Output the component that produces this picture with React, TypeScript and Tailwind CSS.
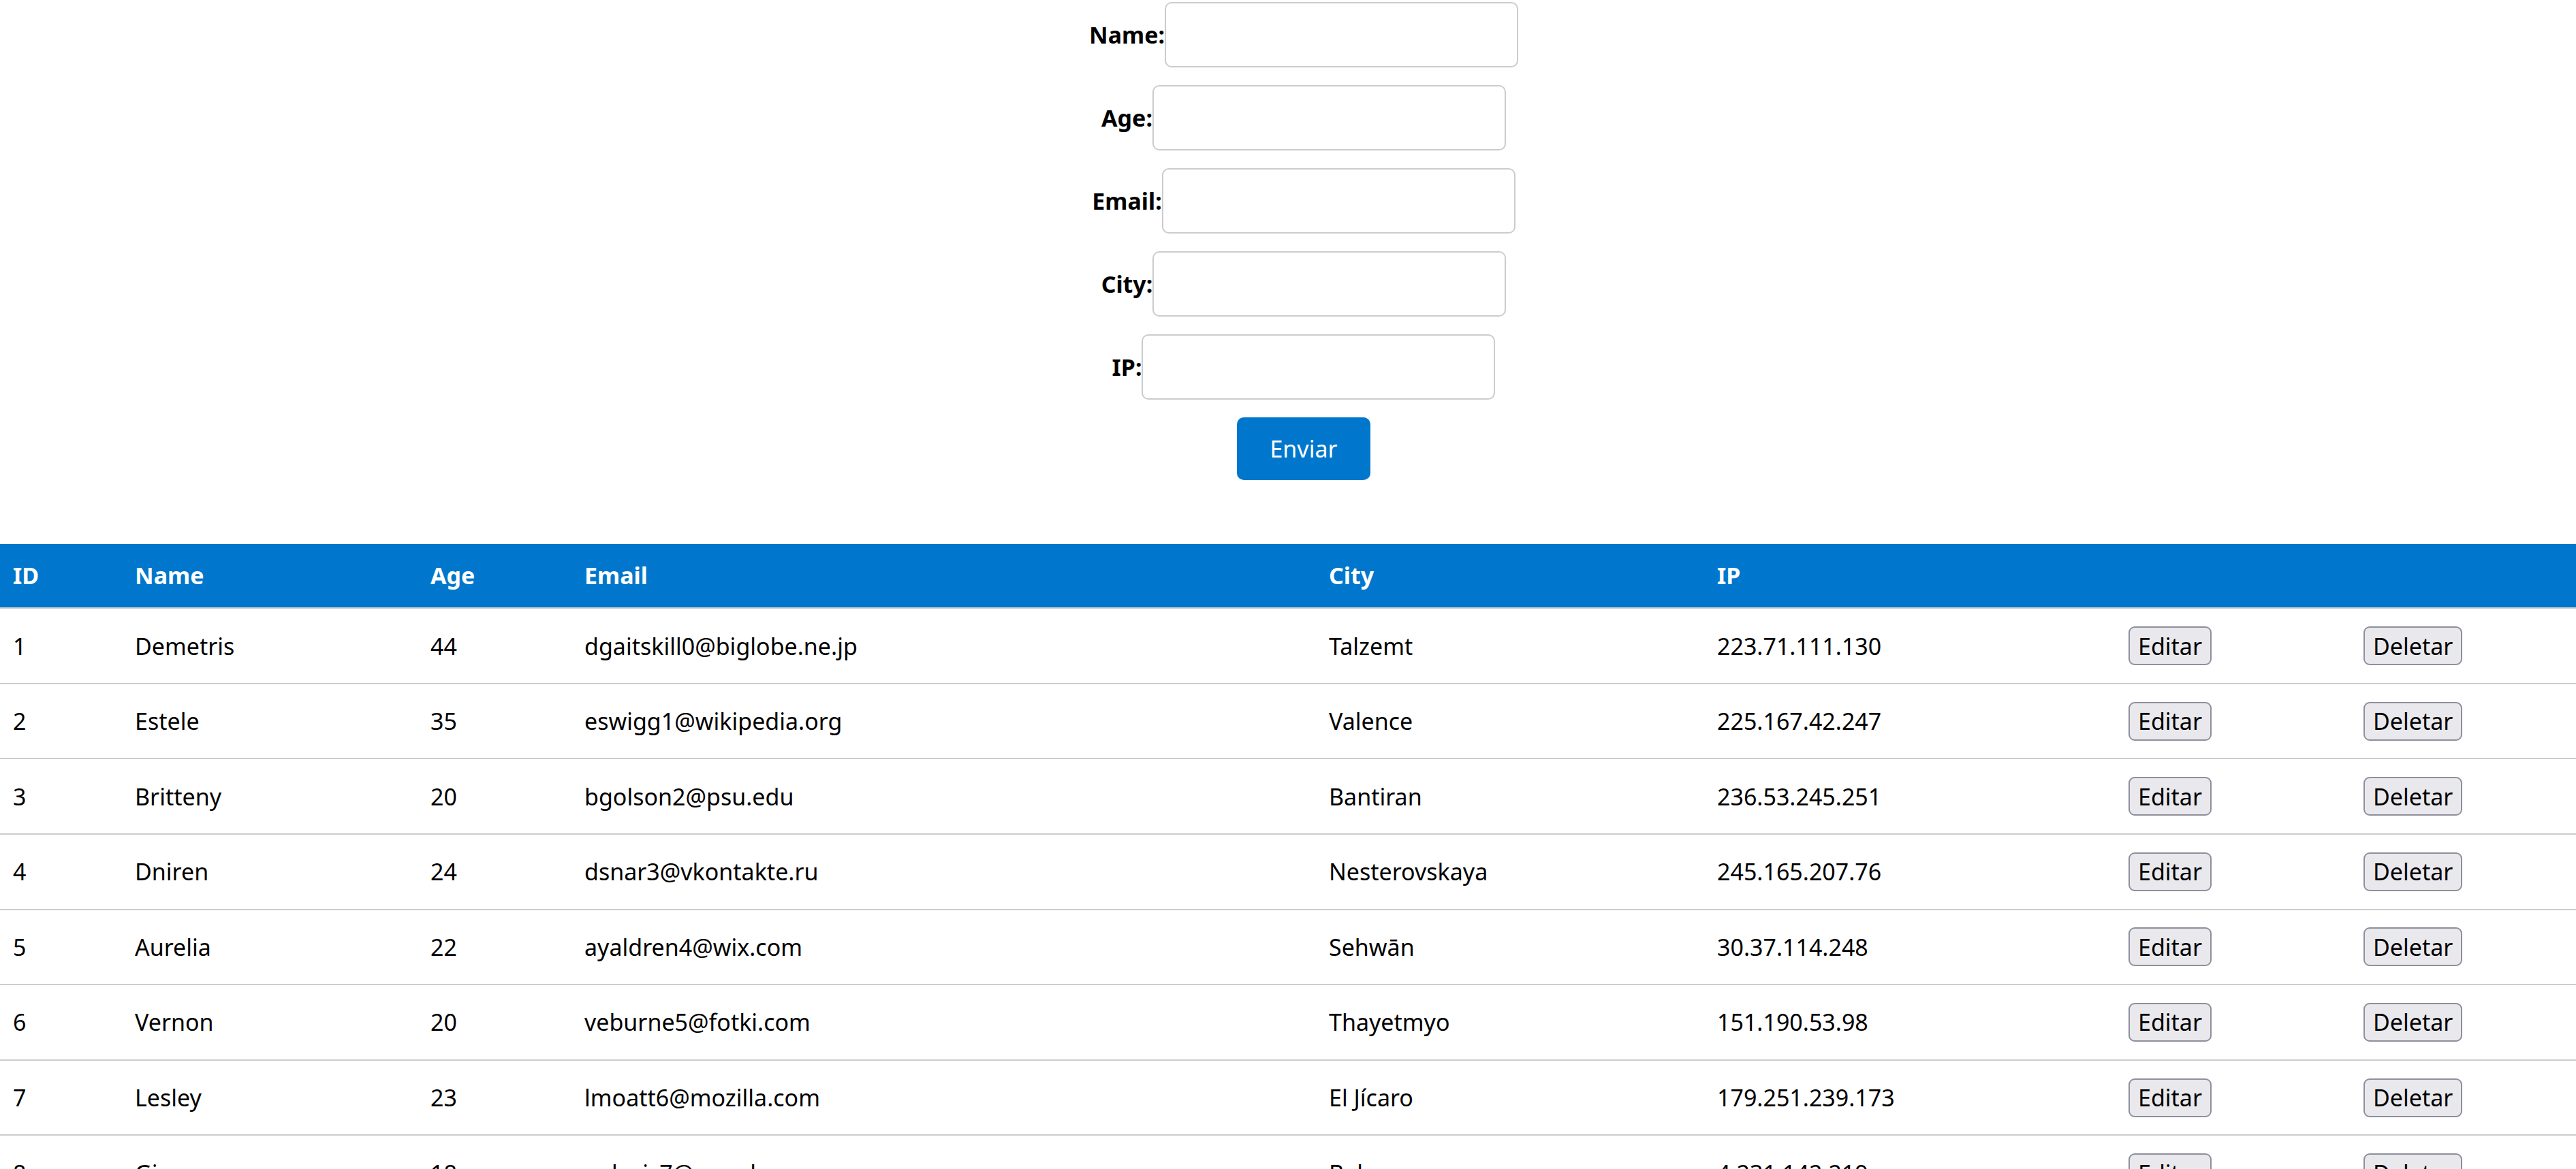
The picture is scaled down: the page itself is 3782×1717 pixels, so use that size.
import { useState } from 'react'

type User = {
  id: number
  name: string
  age: number
  email: string
  city: string
  ip: string
}

const users: User[] = [
  { id: 1, name: 'Demetris', age: 44, email: 'dgaitskill0@biglobe.ne.jp', city: 'Talzemt', ip: '223.71.111.130' },
  { id: 2, name: 'Estele', age: 35, email: 'eswigg1@wikipedia.org', city: 'Valence', ip: '225.167.42.247' },
  { id: 3, name: 'Britteny', age: 20, email: 'bgolson2@psu.edu', city: 'Bantiran', ip: '236.53.245.251' },
  { id: 4, name: 'Dniren', age: 24, email: 'dsnar3@vkontakte.ru', city: 'Nesterovskaya', ip: '245.165.207.76' },
  { id: 5, name: 'Aurelia', age: 22, email: 'ayaldren4@wix.com', city: 'Sehwān', ip: '30.37.114.248' },
  { id: 6, name: 'Vernon', age: 20, email: 'veburne5@fotki.com', city: 'Thayetmyo', ip: '151.190.53.98' },
  { id: 7, name: 'Lesley', age: 23, email: 'lmoatt6@mozilla.com', city: 'El Jícaro', ip: '179.251.239.173' },
  { id: 8, name: 'Giana', age: 18, email: 'galexis7@google.ca', city: 'Bakey', ip: '4.231.142.219' },
  { id: 9, name: 'Marchelle', age: 31, email: 'mbreem8@ucoz.ru', city: 'Jinhe', ip: '88.12.201.45' },
]

const fields = ['Name', 'Age', 'Email', 'City', 'IP']

export default function App() {
  const [values, setValues] = useState<Record<string, string>>({})

  return (
    <div className="font-['Noto_Sans',sans-serif] text-[34px] text-black bg-white min-h-screen">
      {/* form */}
      <form
        className="flex flex-col items-center gap-[26.4px] pt-[3px] pl-[46px]"
        onSubmit={(e) => e.preventDefault()}
      >
        {fields.map((f) => (
          <div key={f} className="flex items-center">
            <label className="font-bold leading-[46px]">{f}:</label>
            <input
              className="w-[519px] h-[95.6px] border-2 border-[#cccccc] rounded-[10px] px-[20px] outline-none"
              value={values[f] ?? ''}
              onChange={(e) => setValues({ ...values, [f]: e.target.value })}
            />
          </div>
        ))}
        <button
          type="submit"
          className="w-[196px] h-[92.4px] rounded-[10px] bg-[#0077cc] text-white leading-[46px]"
        >
          Enviar
        </button>
      </form>

      {/* table */}
      <table className="mt-[93.3px] w-full table-fixed border-separate border-spacing-0">
        <colgroup>
          <col className="w-[179px]" />
          <col className="w-[434px]" />
          <col className="w-[226px]" />
          <col className="w-[1093px]" />
          <col className="w-[570px]" />
          <col className="w-[604px]" />
          <col className="w-[345px]" />
          <col className="w-[331px]" />
        </colgroup>
        <thead>
          <tr className="bg-[#0077cc] text-white">
            {['ID', 'Name', 'Age', 'Email', 'City', 'IP', '', ''].map((h, i) => (
              <th
                key={i}
                className="text-left font-bold leading-[46px] px-[19px] py-[23.8px] border-b-2 border-[#cccccc]"
              >
                {h}
              </th>
            ))}
          </tr>
        </thead>
        <tbody>
          {users.map((u) => (
            <tr key={u.id}>
              <td className="px-[19px] py-[25.8px] border-b-2 border-[#cccccc] leading-[46px]">{u.id}</td>
              <td className="px-[19px] py-[25.8px] border-b-2 border-[#cccccc] leading-[46px]">{u.name}</td>
              <td className="px-[19px] py-[25.8px] border-b-2 border-[#cccccc] leading-[46px]">{u.age}</td>
              <td className="px-[19px] py-[25.8px] border-b-2 border-[#cccccc] leading-[46px]">{u.email}</td>
              <td className="px-[19px] py-[25.8px] border-b-2 border-[#cccccc] leading-[46px]">{u.city}</td>
              <td className="px-[19px] py-[25.8px] border-b-2 border-[#cccccc] leading-[46px]">{u.ip}</td>
              <td className="px-[19px] py-[25.8px] border-b-2 border-[#cccccc]">
                <button className="flex items-center h-[57px] px-[12px] border-2 border-[#8f8f9d] rounded-[9px] bg-[#e9e9ed] leading-[46px]">
                  Editar
                </button>
              </td>
              <td className="px-[19px] py-[25.8px] border-b-2 border-[#cccccc]">
                <button className="flex items-center h-[57px] px-[12px] border-2 border-[#8f8f9d] rounded-[9px] bg-[#e9e9ed] leading-[46px]">
                  Deletar
                </button>
              </td>
            </tr>
          ))}
        </tbody>
      </table>
    </div>
  )
}
